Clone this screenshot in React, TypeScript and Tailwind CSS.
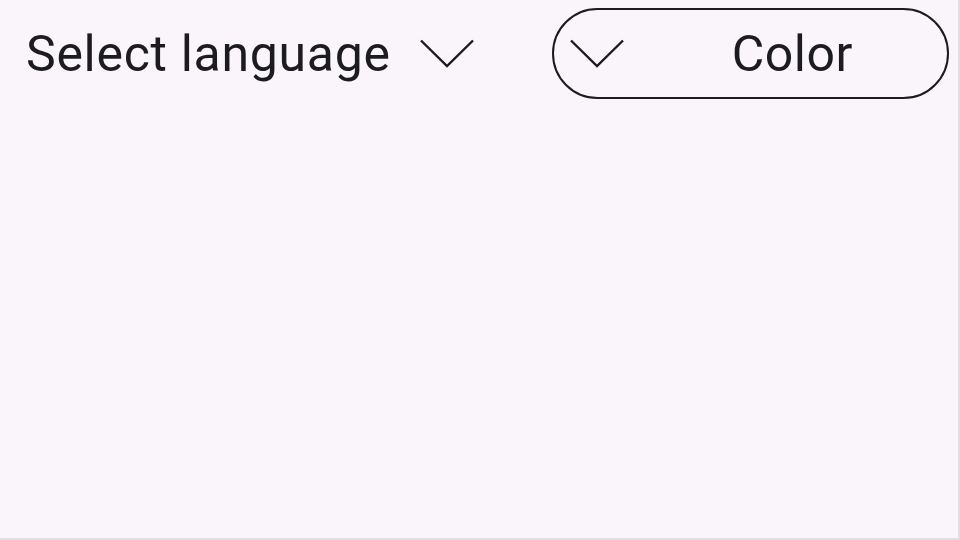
import React from 'react';

function Chevron() {
  return (
    <svg width="54" height="29" viewBox="0 0 54 29" fill="none" stroke="#1c1b1f" strokeWidth="2.4" strokeLinejoin="miter">
      <polyline points="1,1.5 27,27 53,1.5" />
    </svg>
  );
}

export default function App() {
  return (
    <div className="w-[960px] h-[540px] bg-[#f9f5fa] border-r-2 border-b-2 border-[#e2dee3] text-[#1c1b1f] font-['Roboto',sans-serif] overflow-hidden">
      <div className="flex items-center justify-between pt-[8px] pl-[26px] pr-[9px]">
        <button className="flex items-center gap-[29px]">
          <span className="text-[50px] leading-none tracking-[0.7px]">Select language</span>
          <Chevron />
        </button>
        <button className="flex items-center w-[397px] h-[91px] rounded-full border-[2.4px] border-[#1c1b1f] pl-[16px] pr-[94px]">
          <Chevron />
          <span className="flex-1 text-right text-[50px] leading-none tracking-[0.5px]">Color</span>
        </button>
      </div>
    </div>
  );
}
